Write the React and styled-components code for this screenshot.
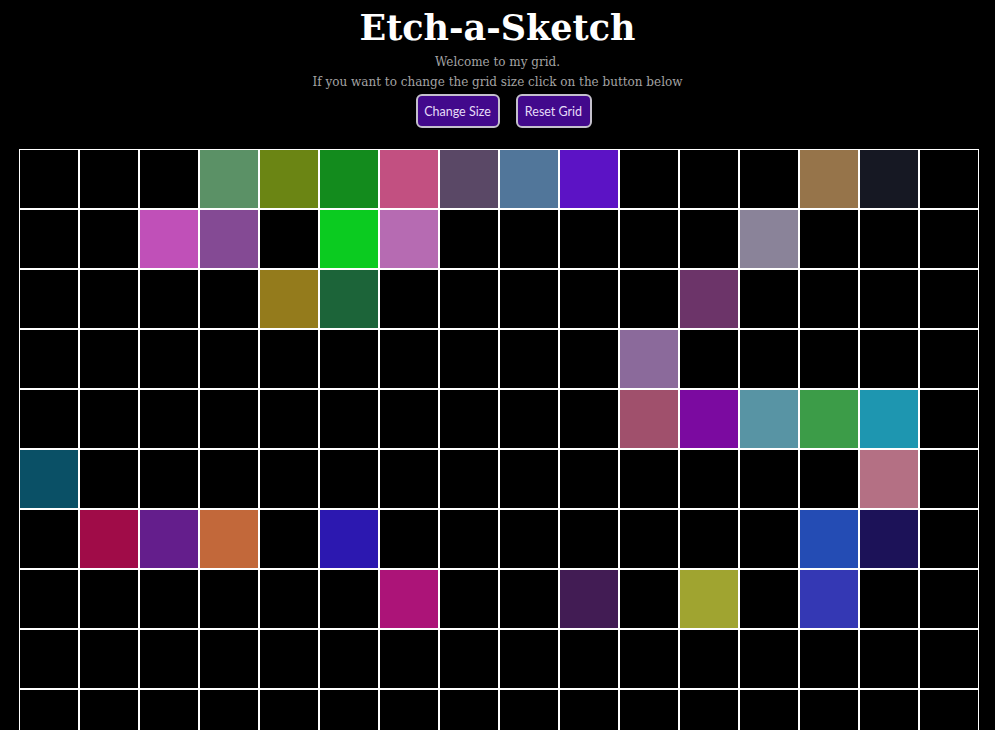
import React from "react";
import styled, { createGlobalStyle } from "styled-components";

const GlobalStyle = createGlobalStyle`
  html, body {
    margin: 0;
    padding: 0;
    background: #000;
  }
  body {
    font-family: "DejaVu Serif", serif;
    overflow: hidden;
  }
`;

const Page = styled.div`
  display: flex;
  flex-direction: column;
  align-items: center;
  background: #000;
  min-height: 730px;
`;

const Title = styled.h1`
  margin: 7px 0 3px;
  font-family: "DejaVu Serif", serif;
  font-weight: bold;
  font-size: 35px;
  line-height: 42px;
  color: #ffffff;
`;

const Intro = styled.p`
  margin: 0;
  font-family: "DejaVu Serif", serif;
  font-size: 12px;
  line-height: 20px;
  color: #a3a3a3;
  text-align: center;
`;

const ButtonRow = styled.div`
  display: flex;
  gap: 16px;
  margin-top: 2px;
  padding-left: 12px;
`;

const Button = styled.button`
  box-sizing: border-box;
  height: 34px;
  padding: 0;
  white-space: nowrap;
  background: #42098c;
  color: #e6dcf8;
  border: 2px solid #c4c0cc;
  border-radius: 6px;
  font-family: "Lato", "Noto Sans", sans-serif;
  font-size: 12.5px;
  cursor: pointer;
  width: ${(p) => p.$w}px;
`;

const GridWrap = styled.div`
  align-self: stretch;
  padding-left: 19px;
  margin-top: 21px;
`;

const Grid = styled.div`
  display: grid;
  grid-template-columns: repeat(16, 60px);
  grid-auto-rows: 60px;
  width: 960px;
`;

const Cell = styled.div`
  box-sizing: border-box;
  border: 1px solid #ffffff;
  background: ${(p) => p.$color || "#000"};
`;

const colored = {
  "0-3": "#5b9166",
  "0-4": "#6b8514",
  "0-5": "#138b1d",
  "0-6": "#c25081",
  "0-7": "#5a4866",
  "0-8": "#51769a",
  "0-9": "#5c13c5",
  "0-13": "#96744a",
  "0-14": "#161823",
  "1-2": "#c050b8",
  "1-3": "#844a94",
  "1-5": "#0bcb20",
  "1-6": "#b66bb2",
  "1-12": "#8a8399",
  "2-4": "#947b1c",
  "2-5": "#1c6439",
  "2-11": "#6c3469",
  "3-10": "#8b6a9b",
  "4-10": "#a0506c",
  "4-11": "#7b0aa0",
  "4-12": "#5894a4",
  "4-13": "#3c9c48",
  "4-14": "#1e96b0",
  "5-0": "#0a5066",
  "5-14": "#b47084",
  "6-1": "#a00c48",
  "6-2": "#641e8c",
  "6-3": "#c2683a",
  "6-5": "#2c18b0",
  "6-13": "#244cb4",
  "6-14": "#1c1258",
  "7-6": "#ac1478",
  "7-9": "#421c54",
  "7-11": "#a0a430",
  "7-13": "#3438b4",
};

export default function App() {
  const cells = [];
  for (let r = 0; r < 16; r++) {
    for (let c = 0; c < 16; c++) {
      cells.push(<Cell key={`${r}-${c}`} $color={colored[`${r}-${c}`]} />);
    }
  }
  return (
    <>
      <GlobalStyle />
      <Page>
        <Title>Etch-a-Sketch</Title>
        <Intro>
          Welcome to my grid.
          <br />
          If you want to change the grid size click on the button below
        </Intro>
        <ButtonRow>
          <Button $w={84}>Change Size</Button>
          <Button $w={76}>Reset Grid</Button>
        </ButtonRow>
        <GridWrap>
          <Grid>{cells}</Grid>
        </GridWrap>
      </Page>
    </>
  );
}
